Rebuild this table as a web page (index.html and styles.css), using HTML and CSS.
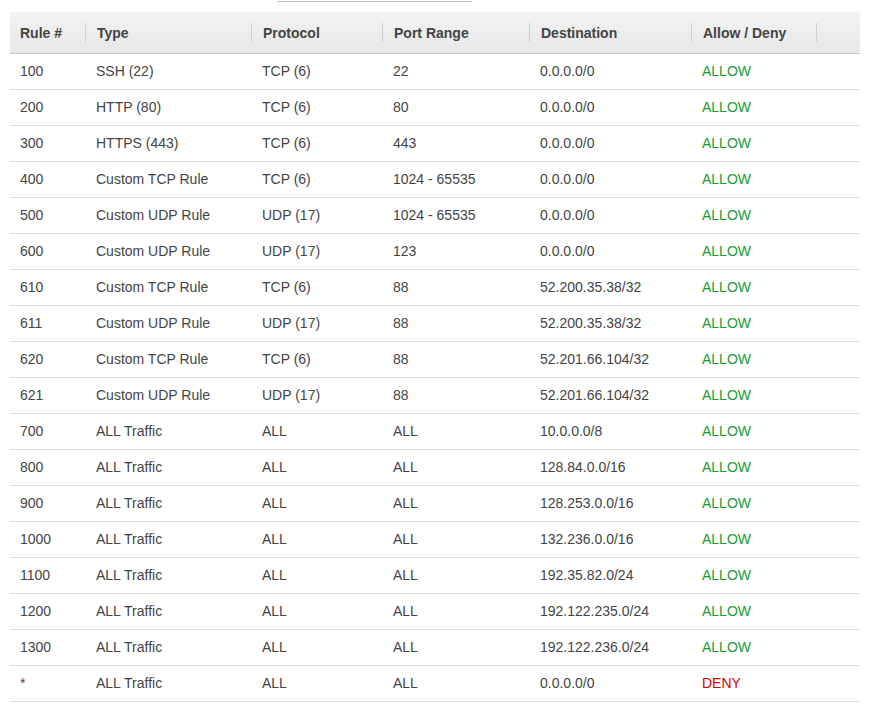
FILE: index.html
```html
<!DOCTYPE html>
<html>
<head>
<meta charset="utf-8">
<link rel="stylesheet" href="styles.css">
</head>
<body>
<div class="topbar"></div>
<table class="rules">
  <colgroup>
    <col class="c1"><col class="c2"><col class="c3"><col class="c4"><col class="c5"><col class="c6"><col class="c7">
  </colgroup>
  <thead>
    <tr>
      <th class="sep">Rule #</th>
      <th class="sep">Type</th>
      <th class="sep">Protocol</th>
      <th class="sep">Port Range</th>
      <th class="sep">Destination</th>
      <th class="sep">Allow / Deny</th>
      <th></th>
    </tr>
  </thead>
  <tbody>
    <tr><td>100</td><td>SSH (22)</td><td>TCP (6)</td><td>22</td><td>0.0.0.0/0</td><td class="allow">ALLOW</td><td></td></tr>
    <tr><td>200</td><td>HTTP (80)</td><td>TCP (6)</td><td>80</td><td>0.0.0.0/0</td><td class="allow">ALLOW</td><td></td></tr>
    <tr><td>300</td><td>HTTPS (443)</td><td>TCP (6)</td><td>443</td><td>0.0.0.0/0</td><td class="allow">ALLOW</td><td></td></tr>
    <tr><td>400</td><td>Custom TCP Rule</td><td>TCP (6)</td><td>1024 - 65535</td><td>0.0.0.0/0</td><td class="allow">ALLOW</td><td></td></tr>
    <tr><td>500</td><td>Custom UDP Rule</td><td>UDP (17)</td><td>1024 - 65535</td><td>0.0.0.0/0</td><td class="allow">ALLOW</td><td></td></tr>
    <tr><td>600</td><td>Custom UDP Rule</td><td>UDP (17)</td><td>123</td><td>0.0.0.0/0</td><td class="allow">ALLOW</td><td></td></tr>
    <tr><td>610</td><td>Custom TCP Rule</td><td>TCP (6)</td><td>88</td><td>52.200.35.38/32</td><td class="allow">ALLOW</td><td></td></tr>
    <tr><td>611</td><td>Custom UDP Rule</td><td>UDP (17)</td><td>88</td><td>52.200.35.38/32</td><td class="allow">ALLOW</td><td></td></tr>
    <tr><td>620</td><td>Custom TCP Rule</td><td>TCP (6)</td><td>88</td><td>52.201.66.104/32</td><td class="allow">ALLOW</td><td></td></tr>
    <tr><td>621</td><td>Custom UDP Rule</td><td>UDP (17)</td><td>88</td><td>52.201.66.104/32</td><td class="allow">ALLOW</td><td></td></tr>
    <tr><td>700</td><td>ALL Traffic</td><td>ALL</td><td>ALL</td><td>10.0.0.0/8</td><td class="allow">ALLOW</td><td></td></tr>
    <tr><td>800</td><td>ALL Traffic</td><td>ALL</td><td>ALL</td><td>128.84.0.0/16</td><td class="allow">ALLOW</td><td></td></tr>
    <tr><td>900</td><td>ALL Traffic</td><td>ALL</td><td>ALL</td><td>128.253.0.0/16</td><td class="allow">ALLOW</td><td></td></tr>
    <tr><td>1000</td><td>ALL Traffic</td><td>ALL</td><td>ALL</td><td>132.236.0.0/16</td><td class="allow">ALLOW</td><td></td></tr>
    <tr><td>1100</td><td>ALL Traffic</td><td>ALL</td><td>ALL</td><td>192.35.82.0/24</td><td class="allow">ALLOW</td><td></td></tr>
    <tr><td>1200</td><td>ALL Traffic</td><td>ALL</td><td>ALL</td><td>192.122.235.0/24</td><td class="allow">ALLOW</td><td></td></tr>
    <tr><td>1300</td><td>ALL Traffic</td><td>ALL</td><td>ALL</td><td>192.122.236.0/24</td><td class="allow">ALLOW</td><td></td></tr>
    <tr><td>*</td><td>ALL Traffic</td><td>ALL</td><td>ALL</td><td>0.0.0.0/0</td><td class="deny">DENY</td><td></td></tr>
  </tbody>
</table>
</body>
</html>
```
FILE: styles.css
```css
html, body {
  margin: 0;
  padding: 0;
  background: #fff;
}
body {
  font-family: "Liberation Sans", Arial, Helvetica, sans-serif;
  font-size: 14px;
  color: #444;
}
.topbar {
  margin-left: 277px;
  width: 195px;
  height: 1px;
  border-bottom: 1px solid #c8c8c8;
}
.rules {
  margin: 10px 0 0 10px;
  width: 850px;
  border-collapse: collapse;
  table-layout: fixed;
}
.c1 { width: 76px; }
.c2 { width: 166px; }
.c3 { width: 131px; }
.c4 { width: 147px; }
.c5 { width: 162px; }
.c6 { width: 125px; }
.c7 { width: 43px; }
.rules th {
  height: 41px;
  padding: 0 0 0 11px;
  text-align: left;
  font-weight: bold;
  color: #444;
  background: linear-gradient(#f3f3f3, #e7e7e7);
  border-bottom: 1px solid #c9c9c9;
  position: relative;
  white-space: nowrap;
}
.rules th.sep::after {
  content: "";
  position: absolute;
  right: 0;
  top: 11px;
  width: 1px;
  height: 19px;
  background: #cfcfcf;
}
.rules th:first-child { padding-left: 10px; }
.rules td {
  box-sizing: border-box;
  height: 36px;
  padding: 0 0 2px 10px;
  border-bottom: 1px solid #dcdcdc;
  white-space: nowrap;
  color: #444;
}
.rules td.allow { color: #1a9c34; }
.rules td.deny { color: #d40000; }
```
